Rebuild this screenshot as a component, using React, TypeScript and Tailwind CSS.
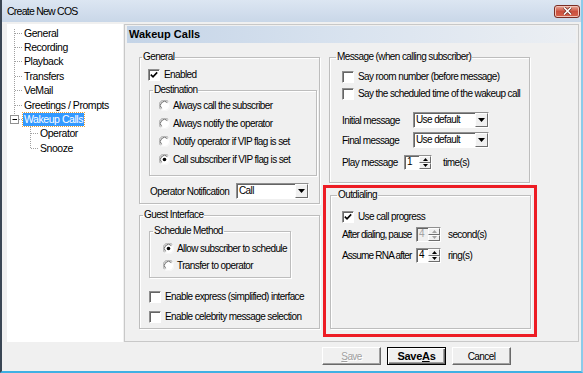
import React from "react";

// Win classic-ish bevels
const sunken =
  "border border-t-[#8f8f8f] border-l-[#8f8f8f] border-r-white border-b-white shadow-[inset_1px_1px_0_#646464]";
const raised =
  "border border-t-[#fdfdfd] border-l-[#fdfdfd] border-r-[#6d6d6d] border-b-[#6d6d6d] bg-[#f0f0f0]";

type Kids = { children?: React.ReactNode; className?: string };

const CheckBox = ({
  checked = false,
  label,
  className = "",
}: {
  checked?: boolean;
  label: string;
  className?: string;
}) => (
  <div className={`flex h-[13px] items-center gap-[4px] ${className}`}>
    <span
      className={`flex h-[12px] w-[12px] shrink-0 items-center justify-center bg-white ${sunken}`}
    >
      {checked && (
        <svg width="8" height="8" viewBox="0 0 8 8">
          <path d="M0.8 3.6 L3 5.8 L7.2 1.4" fill="none" stroke="#000" strokeWidth="1.6" />
        </svg>
      )}
    </span>
    <span>{label}</span>
  </div>
);

const Radio = ({ on = false, label }: { on?: boolean; label: string }) => (
  <div className="flex h-[13px] items-center gap-[3px]">
    <svg width="11" height="11" viewBox="0 0 11 11" className="shrink-0">
      <circle cx="5.5" cy="5.5" r="4.6" fill="#fff" />
      <path d="M1.6 9.4 A5 5 0 0 1 9.4 1.6" fill="none" stroke="#a3a3a3" />
      <path d="M2.6 8.4 A4.1 4.1 0 0 1 8.4 2.6" fill="none" stroke="#6a6a6a" />
      <path d="M9.4 1.6 A5 5 0 0 1 1.6 9.4" fill="none" stroke="#fafafa" />
      {on && <circle cx="5.5" cy="5.5" r="1.8" fill="#000" />}
    </svg>
    <span>{label}</span>
  </div>
);

const Combo = ({ value, className = "" }: { value: string; className?: string }) => (
  <div className={`flex h-[16px] bg-white ${sunken} ${className}`}>
    <span className="flex-1 pl-[2px] leading-[13px]">{value}</span>
    <span className={`flex w-[13px] items-center justify-center ${raised}`}>
      <svg width="7" height="4" viewBox="0 0 7 4">
        <path d="M0 0h7L3.5 4z" fill="#000" />
      </svg>
    </span>
  </div>
);

const Spin = ({
  value,
  disabled = false,
  className = "",
}: {
  value: string;
  disabled?: boolean;
  className?: string;
}) => {
  const arrow = disabled ? "#a3a3a3" : "#000";
  return (
    <div
      className={`flex h-[15px] ${sunken} ${
        disabled ? "bg-[#f0f0f0] text-[#a3a3a3]" : "bg-white"
      } ${className}`}
    >
      <span className="flex-1 pl-[2px] leading-[12px]">{value}</span>
      <span className="flex w-[12px] flex-col">
        <span className={`flex flex-1 items-center justify-center ${raised}`}>
          <svg width="5" height="3" viewBox="0 0 5 3">
            <path d="M0 3h5L2.5 0z" fill={arrow} />
          </svg>
        </span>
        <span className={`flex flex-1 items-center justify-center ${raised}`}>
          <svg width="5" height="3" viewBox="0 0 5 3">
            <path d="M0 0h5L2.5 3z" fill={arrow} />
          </svg>
        </span>
      </span>
    </div>
  );
};

const Group = ({
  title,
  gap = "ml-[2px]",
  className = "",
  children,
}: Kids & { title: string; gap?: string }) => (
  <fieldset
    className={`border border-[#bdbdbd] shadow-[1px_1px_0_#fff,inset_1px_1px_0_#fff] ${className}`}
  >
    <legend className={`px-[1px] leading-[12px] ${gap}`}>{title}</legend>
    {children}
  </fieldset>
);

const Button = ({
  children,
  kind = "normal",
}: {
  children: React.ReactNode;
  kind?: "normal" | "default" | "disabled";
}) => (
  <div
    className={`flex h-[18px] w-[59px] items-center justify-center ${
      kind === "default"
        ? "border border-black text-[11px] font-bold tracking-[-0.3px] shadow-[inset_1px_1px_0_#fff,inset_-1px_-1px_0_#696969,inset_-2px_-2px_0_#a0a0a0]"
        : "border border-t-white border-l-white border-r-[#696969] border-b-[#696969] shadow-[inset_-1px_-1px_0_#a0a0a0]"
    } ${kind === "disabled" ? "text-[#a0a0a0] [text-shadow:1px_1px_0_#fff]" : ""}`}
  >
    {children}
  </div>
);

const tree = [
  { label: "General", child: false },
  { label: "Recording", child: false },
  { label: "Playback", child: false },
  { label: "Transfers", child: false },
  { label: "VeMail", child: false },
  { label: "Greetings / Prompts", child: false },
  { label: "Wakeup Calls", child: false, selected: true },
  { label: "Operator", child: true },
  { label: "Snooze", child: true },
];

const TreeLines = () => (
  <svg className="pointer-events-none absolute inset-0" width="116" height="318">
    <g stroke="#a0a0a0" strokeDasharray="1 1" fill="none">
      <path d="M7.5 5 V91" />
      {[9.5, 23.5, 37.5, 52.5, 66.5, 81.5].map((y) => (
        <path key={y} d={`M8 ${y} H16`} />
      ))}
      <path d="M12 95.5 H16" />
      <path d="M23.5 103 V124" />
      <path d="M24 109.5 H31" />
      <path d="M24 124.5 H31" />
    </g>
    <rect x="3.5" y="91.5" width="8" height="8" fill="#fff" stroke="#919191" />
    <path d="M5.5 95.5 H10" stroke="#000" />
  </svg>
);

export default function App() {
  return (
    <div className="flex h-[373px] w-[583px] flex-col overflow-hidden border-b-2 border-l-2 border-r-2 border-b-[#3fb0e3] border-l-[#3a4654] border-r-[#8ccbea] bg-[#f0f0f0] font-['Liberation_Sans',sans-serif] text-[10px] leading-[13px] tracking-[-0.6px] whitespace-nowrap text-black">
      {/* title bar */}
      <div className="flex h-[22px] shrink-0 items-center justify-between bg-linear-to-b from-[#dce6f2] to-[#c9d7e8] pl-[5px] pr-[1px]">
        <span className="text-[10.5px] tracking-[-0.75px]">Create New COS</span>
        <span className="flex h-[13px] w-[26px] items-center justify-center rounded-[3px] border border-[#7a2d24] bg-linear-to-b from-[#e8a99c] via-[#c9503f] to-[#d6634c] shadow-[inset_0_0_0_1px_#f1c3b8]">
          <svg width="9" height="8" viewBox="0 0 9 8">
            <path d="M1 0.5 L8 7.5 M8 0.5 L1 7.5" stroke="#6b2a20" strokeWidth="3" />
            <path d="M1 0.5 L8 7.5 M8 0.5 L1 7.5" stroke="#fff" strokeWidth="1.6" />
          </svg>
        </span>
      </div>

      <div className="ml-[5px] mt-[2px] flex gap-[1px]">
        {/* tree */}
        <div className="relative h-[318px] w-[116px] bg-white pt-[2px] text-[10.5px] tracking-[-0.45px]">
          <TreeLines />
          {tree.map((t) => (
            <div
              key={t.label}
              className={`flex h-[14.375px] items-center ${t.child ? "pl-[32px]" : "pl-[16px]"}`}
            >
              {t.selected ? (
                <span className="bg-[#3399ff] px-[1px] leading-[13px] text-white outline outline-1 outline-dotted outline-[#e8a23a]">
                  {t.label}
                </span>
              ) : (
                <span className="pl-[1px]">{t.label}</span>
              )}
            </div>
          ))}
        </div>

        {/* settings panel */}
        <div className="h-[318px] w-[455px] border border-[#c8c8c8]">
          <div className="ml-[2px] mt-[1px] flex h-[17px] w-[449px] items-center bg-linear-to-r from-[#c4d4e7] via-[#d9e3ef] to-[#eceff3] pl-[2px] text-[11px] font-bold tracking-[0px]">
            Wakeup Calls
          </div>

          <div className="mt-[8px] flex gap-[9px] pl-[14px]">
            {/* left column */}
            <div className="flex w-[181px] flex-col">
              <Group title="General" className="h-[153px]">
                <div className="pl-[8px]">
                  <CheckBox checked label="Enabled" className="mt-[5px]" />
                  <Group title="Destination" gap="ml-[3px]" className="ml-[1px] mt-[3px] h-[92px] w-[168px]">
                    <div className="flex flex-col gap-[5px] pl-[9px] pt-[3px]">
                      <Radio label="Always call the subscriber" />
                      <Radio label="Always notify the operator" />
                      <Radio label="Notify operator if VIP flag is set" />
                      <Radio on label="Call subscriber if VIP flag is set" />
                    </div>
                  </Group>
                  <div className="ml-[2px] mt-[7px] flex h-[16px] items-center">
                    <span className="w-[86px]">Operator Notification</span>
                    <Combo value="Call" className="w-[73px]" />
                  </div>
                </div>
              </Group>

              <Group title="Guest Interface" gap="ml-[3px]" className="mt-[5px] h-[120px]">
                <div className="pl-[9px]">
                  <Group title="Schedule Method" gap="ml-[3px]" className="mt-[4px] h-[53px] w-[142px]">
                    <div className="flex flex-col gap-[4px] pl-[13px] pt-[5px]">
                      <Radio on label="Allow subscriber to schedule" />
                      <Radio label="Transfer to operator" />
                    </div>
                  </Group>
                  <div className="mt-[12px] flex flex-col gap-[7px]">
                    <CheckBox label="Enable express (simplified) interface" />
                    <CheckBox label="Enable celebrity message selection" />
                  </div>
                </div>
              </Group>
            </div>

            {/* right column */}
            <div className="flex w-[201px] flex-col">
              <Group title="Message (when calling subscriber)" gap="ml-[6px]" className="h-[132px]">
                <div className="pl-[12px]">
                  <div className="mt-[7px] flex flex-col gap-[4px]">
                    <CheckBox label="Say room number (before message)" />
                    <CheckBox label="Say the scheduled time of the wakeup call" />
                  </div>
                  <div className="mt-[12px] flex h-[16px] items-center">
                    <span className="w-[71px]">Initial message</span>
                    <Combo value="Use default" className="w-[76px]" />
                  </div>
                  <div className="mt-[4px] flex h-[16px] items-center">
                    <span className="w-[71px]">Final message</span>
                    <Combo value="Use default" className="w-[76px]" />
                  </div>
                  <div className="mt-[7px] flex h-[15px] items-center">
                    <span className="w-[62px]">Play message</span>
                    <Spin value="1" className="w-[28px]" />
                    <span className="ml-[11px]">time(s)</span>
                  </div>
                </div>
              </Group>

              <div className="-ml-[6px] mt-[2px] h-[152px] w-[214px] border-[3px] border-[#ed1c24] pl-[4px] pt-[1px]">
                <Group title="Outdialing" gap="ml-[6px]" className="h-[140px] w-[201px]">
                  <div className="pl-[11px]">
                    <CheckBox checked label="Use call progress" className="mt-[9px]" />
                    <div className="mt-[4px] flex h-[15px] items-center">
                      <span className="w-[74px] tracking-[-0.8px]">After dialing, pause</span>
                      <Spin value="4" disabled className="w-[25px]" />
                      <span className="ml-[7px]">second(s)</span>
                    </div>
                    <div className="mt-[6px] flex h-[15px] items-center">
                      <span className="w-[74px] tracking-[-0.8px]">Assume RNA after</span>
                      <Spin value="4" className="w-[25px]" />
                      <span className="ml-[7px]">ring(s)</span>
                    </div>
                  </div>
                </Group>
              </div>
            </div>
          </div>
        </div>
      </div>

      {/* buttons */}
      <div className="ml-[320px] mt-[5px] flex gap-[6px]">
        <Button kind="disabled">
          <span className="underline">S</span>ave
        </Button>
        <Button kind="default">
          Save<span className="underline">A</span>s
        </Button>
        <Button>Cancel</Button>
      </div>
    </div>
  );
}
